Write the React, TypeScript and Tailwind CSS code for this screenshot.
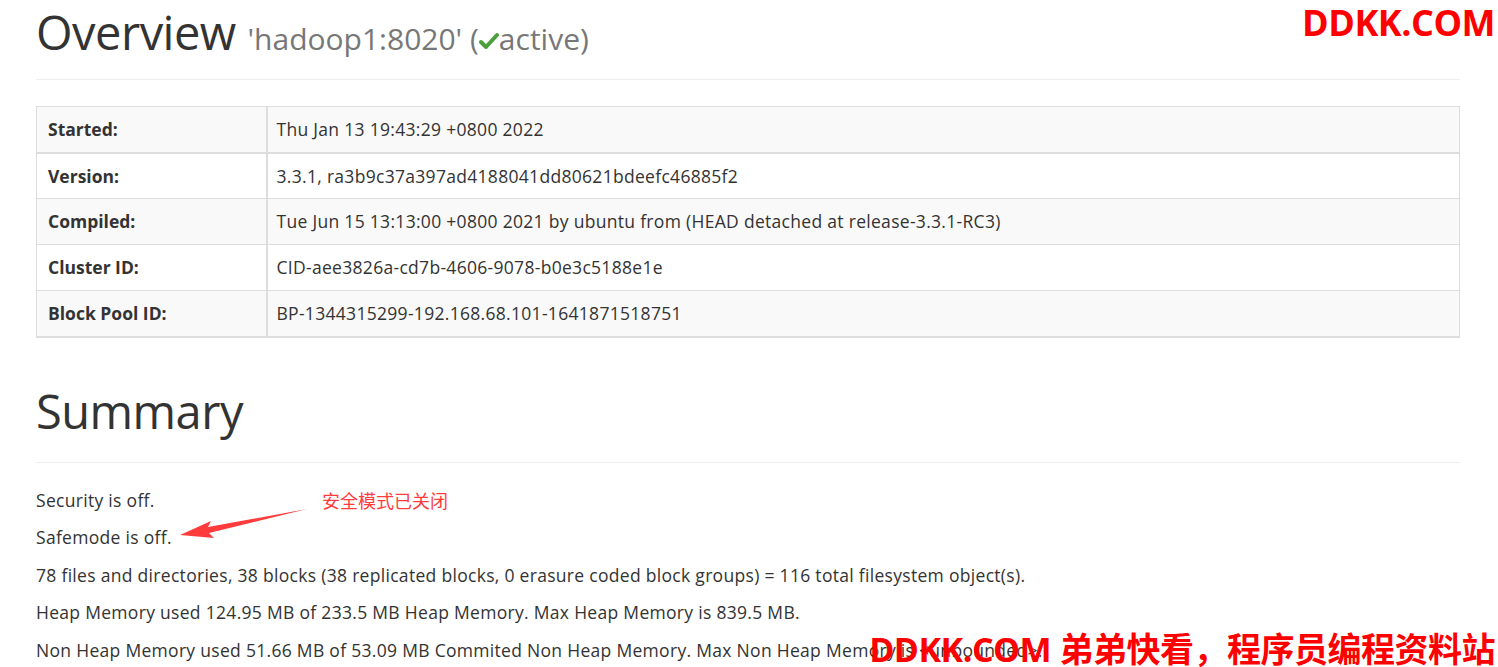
const rows = [
  { label: 'Started:', value: 'Thu Jan 13 19:43:29 +0800 2022' },
  { label: 'Version:', value: '3.3.1, ra3b9c37a397ad4188041dd80621bdeefc46885f2' },
  { label: 'Compiled:', value: 'Tue Jun 15 13:13:00 +0800 2021 by ubuntu from (HEAD detached at release-3.3.1-RC3)' },
  { label: 'Cluster ID:', value: 'CID-aee3826a-cd7b-4606-9078-b0e3c5188e1e' },
  { label: 'Block Pool ID:', value: 'BP-1344315299-192.168.68.101-1641871518751' },
];

const summary = [
  'Security is off.',
  'Safemode is off.',
  '78 files and directories, 38 blocks (38 replicated blocks, 0 erasure coded block groups) = 116 total filesystem object(s).',
  'Heap Memory used 124.95 MB of 233.5 MB Heap Memory. Max Heap Memory is 839.5 MB.',
  'Non Heap Memory used 51.66 MB of 53.09 MB Commited Non Heap Memory. Max Non Heap Memory is <unbounded>.',
];

function Check() {
  return (
    <svg width="20" height="18" viewBox="0 0 20 18" className="inline-block mb-[2px]">
      <path d="M2 10 L7 15 L18 3" fill="none" stroke="#4ca03c" strokeWidth="4" strokeLinecap="round" strokeLinejoin="round" />
    </svg>
  );
}

export default function App() {
  return (
    <div className="relative h-[667px] w-full overflow-hidden bg-white text-[#333] font-['Open_Sans','Noto_Sans',sans-serif]">
      <div className="pl-[36px] pr-[38px]">
        <div className="h-[80px] border-b border-[#eee] flex items-end pb-[23px]">
          <h1 className="text-[47px] leading-none font-normal tracking-[-0.5px]">
            Overview{' '}
            <span className="text-[30px] text-[#777] tracking-normal">
              'hadoop1:8020' (<Check />active)
            </span>
          </h1>
        </div>

        <table className="mt-[26px] w-full border-collapse border border-[#ddd] text-[17.5px] tracking-[0.3px]">
          <tbody>
            {rows.map((r, i) => (
              <tr
                key={r.label}
                className={`${i % 2 === 0 ? 'bg-[#f9f9f9]' : 'bg-white'} ${i === 0 || i === rows.length - 1 ? 'border-b-2' : 'border-b'} border-[#ddd]`}
              >
                <th className="w-[230px] h-[46px] px-[11px] text-left font-bold tracking-normal border-r-2 border-[#ddd]">{r.label}</th>
                <td className="h-[46px] px-[9px]">{r.value}</td>
              </tr>
            ))}
          </tbody>
        </table>

        <div className="h-[125px] border-b border-[#eee] flex items-end pb-[27px]">
          <h1 className="text-[47px] leading-none font-normal tracking-[-0.5px]">Summary</h1>
        </div>

        <div className="pt-[25px] text-[17.5px] leading-[25px] tracking-[0.3px]">
          {summary.map((s) => (
            <p key={s} className="mb-[12.5px]">{s}</p>
          ))}
        </div>
      </div>

      {/* annotation */}
      <div className="absolute left-[322px] top-[487px] text-[18px] leading-[26px] text-[#ff3b3b] font-['Noto_Sans_CJK_SC',sans-serif]">
        安全模式已关闭
      </div>
      <svg className="absolute left-[178px] top-[505px]" width="132" height="36" viewBox="0 0 132 36">
        <path d="M129 4 L30 22 L33 16 L2 30 L36 33 L31 28 L129 4 Z" fill="#ff3b3b" />
      </svg>

      {/* watermarks */}
      <div className="absolute right-[3px] top-[0px] text-[36px] leading-[46px] font-bold text-[#ff0000] font-['Open_Sans',sans-serif] tracking-[-0.5px]">
        DDKK.COM
      </div>
      <div className="absolute right-[3px] top-[626px] text-[34px] leading-[46px] font-bold text-[#ff0000] font-['Open_Sans','Noto_Sans_CJK_SC',sans-serif] tracking-[-0.5px] whitespace-nowrap">
        DDKK.COM 弟弟快看，程序员编程资料站
      </div>
    </div>
  );
}
